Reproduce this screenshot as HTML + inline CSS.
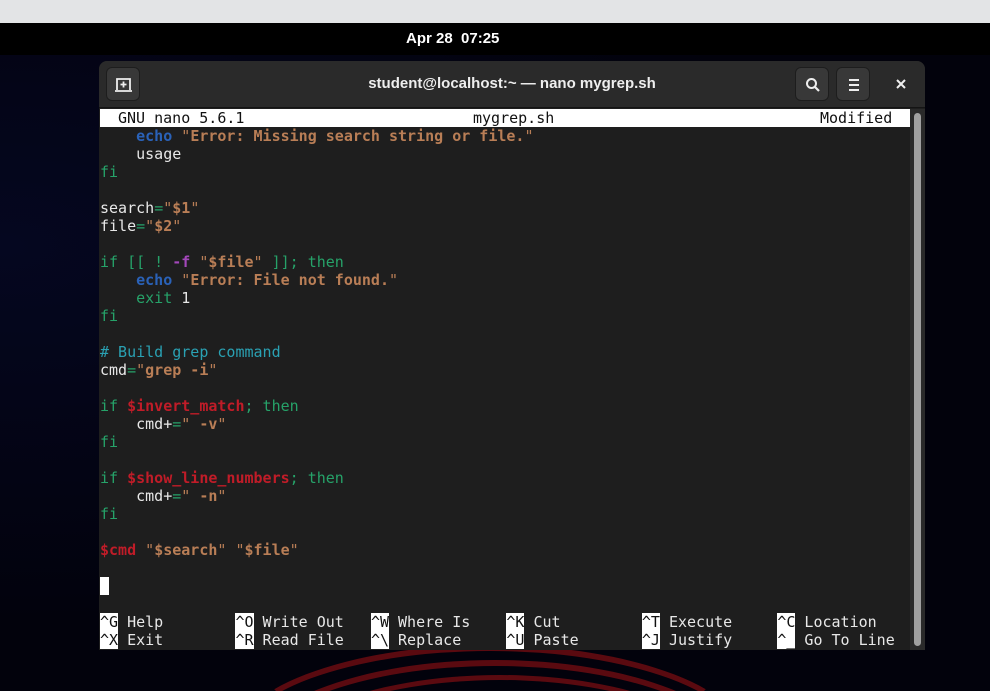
<!DOCTYPE html>
<html><head><meta charset="utf-8"><style>
*{margin:0;padding:0;box-sizing:border-box}
html,body{width:990px;height:691px;overflow:hidden}
body{position:relative;background:#02020c;font-family:"DejaVu Sans Mono","Liberation Mono",monospace}
.top{position:absolute;left:0;top:0;width:990px;height:23px;background:#e3e4e6}
.bar{position:absolute;left:0;top:23px;width:990px;height:32px;background:#000;color:#fff;font:bold 15px "Liberation Sans",sans-serif;}
.bar span{position:absolute;left:406px;top:7px}
.desk{position:absolute;left:0;top:55px;width:990px;height:636px;overflow:hidden;background:radial-gradient(ellipse at 0% 30%,#050720 0%,#02020c 60%)}
.curve{position:absolute;border-radius:50%;border:5px solid #5a0a10;border-bottom:none;border-left-color:transparent;border-right-color:transparent}
.win{position:absolute;left:99px;top:61px;width:826px;height:589px;background:#1e1e1e;border-radius:8px 8px 0 0;overflow:hidden}
.hdr{position:absolute;left:0;top:0;width:826px;height:47px;background:#2a2a2a;border-bottom:1px solid #141414}
.btn{position:absolute;top:6px;width:34px;height:34px;border-radius:6px;background:#383838;border:1px solid #1d1d1d}
.ttl{position:absolute;left:0;width:826px;top:14px;text-align:center;color:#eee;font:bold 15px "Liberation Sans",sans-serif}
pre{position:absolute;left:1px;top:66px;font-size:15px;line-height:18px;color:#e8e8e8;font-family:"DejaVu Sans Mono","Liberation Mono",monospace}
.tb{position:absolute;left:1px;top:48px;width:810px;height:18px;background:#fff;color:#111;font-size:15px;line-height:18px}
.tb span{position:absolute;top:0}
.g{color:#26a269}.b{color:#2a62b8;font-weight:bold}.s{color:#b97e56;font-weight:bold}.q{color:#b97e56}.p{color:#a347ba;font-weight:bold}.r{color:#c01c28;font-weight:bold}.c{color:#2aa1b3}
.k{background:#fff;color:#111}
.sb{position:absolute;left:811px;top:48px;width:15px;height:541px;background:#2a2a2a}
.th{position:absolute;left:4px;top:4px;width:7px;height:533px;border-radius:4px;background:#a0a0a0}
</style></head><body>
<div class="top"></div>
<div class="bar"><span>Apr 28&nbsp; 07:25</span></div>
<div class="desk">
<div class="curve" style="left:230px;top:590px;width:520px;height:200px;border-width:6px"></div>
<div class="curve" style="left:245px;top:605px;width:500px;height:200px;border-width:6px"></div>
<div class="curve" style="left:260px;top:620px;width:480px;height:200px;border-width:5px"></div>
</div>
<div class="win">
<div class="hdr">
<div class="btn" style="left:7px"><svg width="34" height="34" viewBox="0 0 34 34"><path d="M10 22V11h13v11" fill="none" stroke="#eee" stroke-width="1.8"/><path d="M8 23h17" stroke="#eee" stroke-width="1.8"/><path d="M16.5 13.5v6M13.5 16.5h6" stroke="#eee" stroke-width="1.8"/></svg></div>
<div class="ttl">student@localhost:~ — nano mygrep.sh</div>
<div class="btn" style="left:696px"><svg width="34" height="34" viewBox="0 0 34 34"><circle cx="15.5" cy="15.5" r="4.5" fill="none" stroke="#eee" stroke-width="2"/><path d="M19 19l4 4" stroke="#eee" stroke-width="2.2"/></svg></div>
<div class="btn" style="left:737px"><svg width="34" height="34" viewBox="0 0 34 34"><path d="M12 12h10M12 17h10M12 22h10" stroke="#eee" stroke-width="2"/></svg></div>
<svg style="position:absolute;left:795px;top:16px" width="14" height="14" viewBox="0 0 14 14"><path d="M3 3l8 8M11 3l-8 8" stroke="#eee" stroke-width="2"/></svg>
</div>
<div class="tb"><span style="left:18px">GNU nano 5.6.1</span><span style="left:373px">mygrep.sh</span><span style="left:720px">Modified</span></div>
<pre>    <span class="b">echo</span> <span class="q">"</span><span class="s">Error: Missing search string or file.</span><span class="q">"</span>
    usage
<span class="g">fi</span>

search<span class="g">=</span><span class="q">"</span><span class="s">$1</span><span class="q">"</span>
file<span class="g">=</span><span class="q">"</span><span class="s">$2</span><span class="q">"</span>

<span class="g">if [[ !</span> <span class="p">-f</span> <span class="q">"</span><span class="s">$file</span><span class="q">"</span> <span class="g">]]; then</span>
    <span class="b">echo</span> <span class="q">"</span><span class="s">Error: File not found.</span><span class="q">"</span>
    <span class="g">exit</span> 1
<span class="g">fi</span>

<span class="c"># Build grep command</span>
cmd<span class="g">=</span><span class="q">"</span><span class="s">grep -i</span><span class="q">"</span>

<span class="g">if</span> <span class="r">$invert_match</span><span class="g">; then</span>
    cmd+<span class="g">=</span><span class="q">"</span><span class="s"> -v</span><span class="q">"</span>
<span class="g">fi</span>

<span class="g">if</span> <span class="r">$show_line_numbers</span><span class="g">; then</span>
    cmd+<span class="g">=</span><span class="q">"</span><span class="s"> -n</span><span class="q">"</span>
<span class="g">fi</span>

<span class="r">$cmd</span> <span class="q">"</span><span class="s">$search</span><span class="q">"</span> <span class="q">"</span><span class="s">$file</span><span class="q">"</span>

<span class="k"> </span>

<span class="k">^G</span> Help        <span class="k">^O</span> Write Out   <span class="k">^W</span> Where Is    <span class="k">^K</span> Cut         <span class="k">^T</span> Execute     <span class="k">^C</span> Location
<span class="k">^X</span> Exit        <span class="k">^R</span> Read File   <span class="k">^\</span> Replace     <span class="k">^U</span> Paste       <span class="k">^J</span> Justify     <span class="k">^_</span> Go To Line</pre>
<div class="sb"><div class="th"></div></div>
</div>
</body></html>
